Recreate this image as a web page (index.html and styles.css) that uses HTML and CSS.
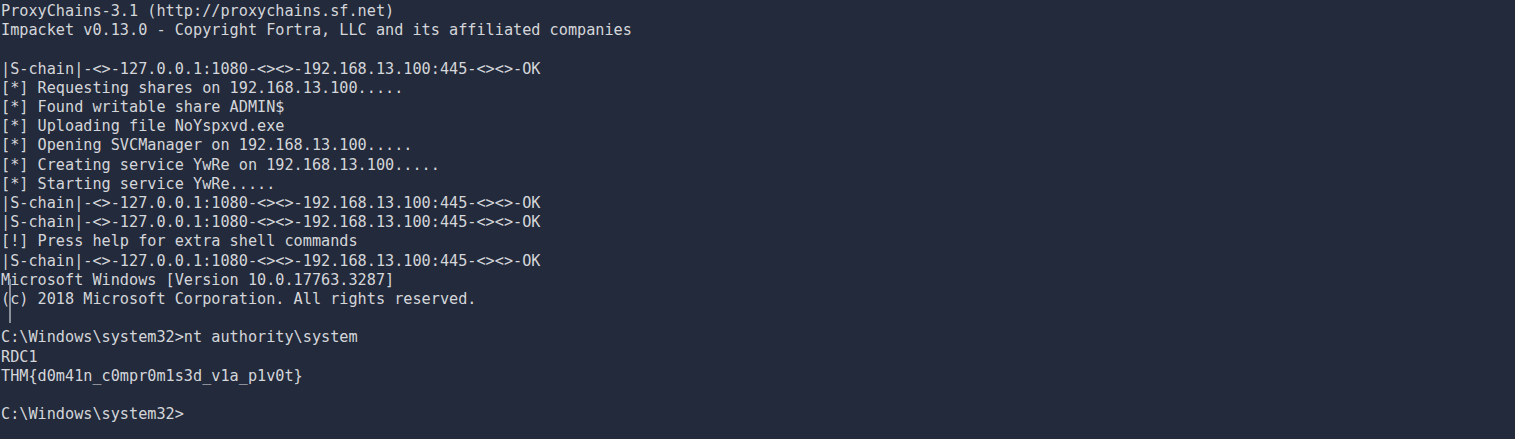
FILE: index.html
```html
<!DOCTYPE html>
<html>
<head>
<meta charset="utf-8">
<link rel="stylesheet" href="styles.css">
</head>
<body>
<div class="term">
<pre class="out">ProxyChains-3.1 (http://proxychains.sf.net)
Impacket v0.13.0 - Copyright Fortra, LLC and its affiliated companies

|S-chain|-&lt;&gt;-127.0.0.1:1080-&lt;&gt;&lt;&gt;-192.168.13.100:445-&lt;&gt;&lt;&gt;-OK
[*] Requesting shares on 192.168.13.100.....
[*] Found writable share ADMIN$
[*] Uploading file NoYspxvd.exe
[*] Opening SVCManager on 192.168.13.100.....
[*] Creating service YwRe on 192.168.13.100.....
[*] Starting service YwRe.....
|S-chain|-&lt;&gt;-127.0.0.1:1080-&lt;&gt;&lt;&gt;-192.168.13.100:445-&lt;&gt;&lt;&gt;-OK
|S-chain|-&lt;&gt;-127.0.0.1:1080-&lt;&gt;&lt;&gt;-192.168.13.100:445-&lt;&gt;&lt;&gt;-OK
[!] Press help for extra shell commands
|S-chain|-&lt;&gt;-127.0.0.1:1080-&lt;&gt;&lt;&gt;-192.168.13.100:445-&lt;&gt;&lt;&gt;-OK
Microsoft Windows [Version 10.0.17763.3287]
(c) 2018 Microsoft Corporation. All rights reserved.

C:\Windows\system32&gt;nt authority\system
RDC1
THM{d0m41n_c0mpr0m1s3d_v1a_p1v0t}

C:\Windows\system32&gt;</pre>
<div class="ibeam"></div>
</div>
</body>
</html>
```
FILE: styles.css
```css
html, body {
  margin: 0;
  padding: 0;
  background: #232a3b;
}
.term {
  position: relative;
  width: 1515px;
  height: 439px;
  overflow: hidden;
  background: #232a3b;
}
.out {
  margin: 0;
  padding: 2px 0 0 1px;
  font-family: "DejaVu Sans Mono", "Liberation Mono", monospace;
  font-size: 15.2px;
  line-height: 19.2px;
  color: #d4d6da;
  white-space: pre;
}
.ibeam {
  position: absolute;
  left: 9px;
  top: 279px;
  width: 2px;
  height: 44px;
  background: #8b909a;
}
```
